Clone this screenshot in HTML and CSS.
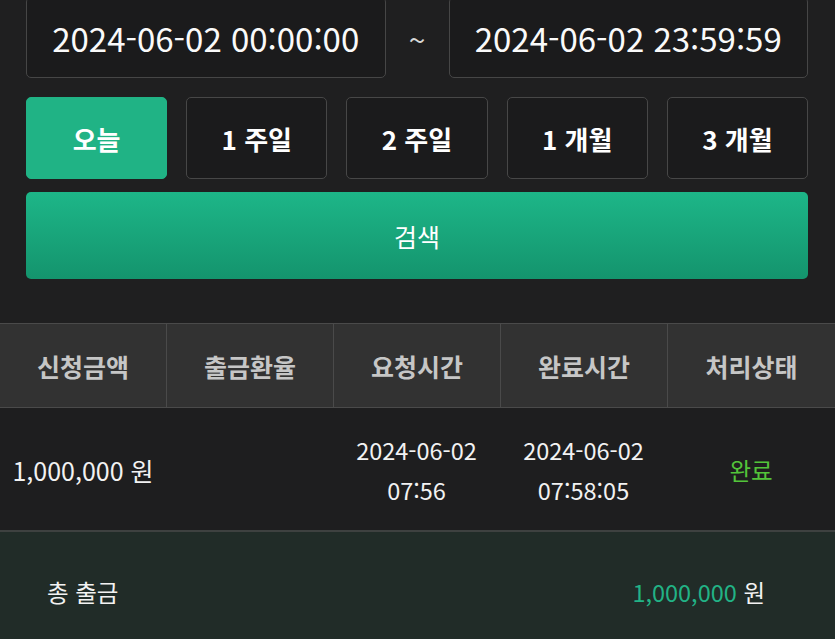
FILE: index.html
```html
<!DOCTYPE html>
<html lang="ko">
<head>
<meta charset="utf-8">
<title>출금 내역</title>
<link rel="stylesheet" href="styles.css">
</head>
<body>
<section class="filters">
  <div class="date-row">
    <div class="date-input">2024-06-02 00:00:00</div>
    <span class="tilde">~</span>
    <div class="date-input">2024-06-02 23:59:59</div>
  </div>
  <div class="period-row">
    <button class="period active">오늘</button>
    <button class="period">1 주일</button>
    <button class="period">2 주일</button>
    <button class="period">1 개월</button>
    <button class="period">3 개월</button>
  </div>
  <button class="search">검색</button>
</section>

<section class="history">
  <div class="thead">
    <div class="th">신청금액</div>
    <div class="th">출금환율</div>
    <div class="th">요청시간</div>
    <div class="th">완료시간</div>
    <div class="th">처리상태</div>
  </div>
  <div class="trow">
    <div class="td amount">1,000,000 원</div>
    <div class="td"></div>
    <div class="td stack"><span>2024-06-02</span><span>07:56</span></div>
    <div class="td stack"><span>2024-06-02</span><span>07:58:05</span></div>
    <div class="td status">완료</div>
  </div>
  <div class="total">
    <span class="total-label">총 출금</span>
    <span class="total-value"><em>1,000,000</em> 원</span>
  </div>
</section>
</body>
</html>
```

FILE: styles.css
```css
* { box-sizing: border-box; }
html, body { margin: 0; padding: 0; }
body {
  background: #1f1f20;
  color: #f2f2f2;
  font-family: "Noto Sans CJK KR", "Noto Sans", sans-serif;
  width: 835px;
  overflow: hidden;
}
.filters {
  padding: 0 27px 0 26px;
  margin-top: -3px;
}
.date-row {
  display: flex;
  align-items: center;
}
.date-input {
  flex: 1;
  height: 81px;
  border: 1px solid #464646;
  border-radius: 5px;
  background: #1b1b1c;
  display: flex;
  align-items: center;
  justify-content: center;
  font-size: 33px;
  color: #fafafa;
}
.tilde {
  width: 63px;
  text-align: center;
  font-size: 30px;
  color: #d8d8d8;
  padding-top: 2px;
}
.period-row {
  display: grid;
  grid-template-columns: repeat(5, 1fr);
  gap: 19px;
  margin-top: 19px;
}
.period {
  height: 82px;
  border: 1px solid #474747;
  border-radius: 5px;
  background: #1b1b1c;
  color: #fff;
  font-family: inherit;
  font-size: 26px;
  font-weight: 700;
  padding: 0;
}
.period.active {
  background: #20b385;
  border-color: #20b385;
}
.search {
  display: block;
  width: 100%;
  height: 87px;
  margin-top: 13px;
  border: 0;
  border-radius: 5px;
  background: linear-gradient(180deg, #1db688 0%, #14946d 100%);
  color: #fff;
  font-family: inherit;
  font-size: 25px;
  font-weight: 400;
}
.history { margin-top: 44px; }
.thead, .trow {
  display: grid;
  grid-template-columns: 166px 167px 167px 167px 168px;
}
.thead {
  height: 85px;
  background: #323232;
  border-top: 1px solid #4a4a4a;
  border-bottom: 1px solid #4a4a4a;
}
.th {
  display: flex;
  align-items: center;
  justify-content: center;
  font-size: 25px;
  font-weight: 700;
  color: #c6c6c6;
  border-left: 1px solid #4a4a4a;
}
.th:first-child { border-left: 0; }
.trow {
  height: 124px;
  padding-top: 2px;
  background: #1e1e1f;
  border-bottom: 2px solid #3e4140;
}
.td {
  display: flex;
  align-items: center;
  justify-content: center;
  font-size: 23.5px;
  color: #f2f2f2;
  white-space: nowrap;
}
.td.amount { font-size: 25px; }
.stack {
  flex-direction: column;
  line-height: 40px;
}
.status { color: #53c43a; }
.total {
  height: 120px;
  background: #212c28;
  display: flex;
  align-items: center;
  justify-content: space-between;
  padding: 0 70px 0 47px;
  font-size: 23.5px;
  color: #f2f2f2;
}
.total-value em {
  font-style: normal;
  color: #22b386;
}
```
